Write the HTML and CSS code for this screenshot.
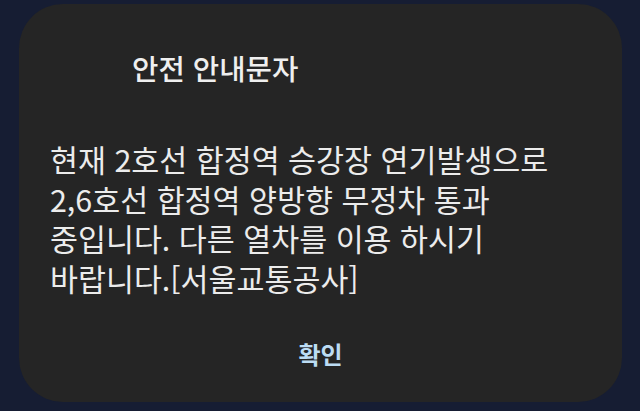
FILE: index.html
```html
<!DOCTYPE html>
<html lang="ko">
<head>
<meta charset="utf-8">
<link rel="stylesheet" href="styles.css">
</head>
<body>
<div class="dialog">
  <h1 class="title">안전 안내문자</h1>
  <p class="message">현재 2호선 합정역 승강장 연기발생으로<br>2,6호선 합정역 양방향 무정차 통과<br>중입니다. 다른 열차를 이용 하시기<br>바랍니다.[서울교통공사]</p>
  <div class="actions"><span class="ok">확인</span></div>
</div>
</body>
</html>
```
FILE: styles.css
```css
html, body {
  margin: 0;
  padding: 0;
}
body {
  width: 640px;
  height: 411px;
  background: #161d33;
  overflow: hidden;
  font-family: "Noto Sans CJK KR", "Noto Sans", sans-serif;
}
.dialog {
  box-sizing: border-box;
  margin: 4px 18px 0 19px;
  height: 398px;
  background: #252525;
  border-radius: 44px;
  padding: 44px 20px 0 31px;
  display: flex;
  flex-direction: column;
}
.title {
  margin: 0 0 0 82px;
  font-size: 28.7px;
  font-weight: 500;
  line-height: 40px;
  color: #efefef;
}
.message {
  margin: 52px 0 0 0;
  font-size: 30.4px;
  font-weight: 400;
  line-height: 39.5px;
  color: #ececec;
}
.actions {
  margin-top: 41px;
  display: flex;
  justify-content: center;
  padding-right: 11px;
}
.ok {
  font-size: 24px;
  font-weight: 700;
  line-height: 30px;
  color: #bcdcf4;
}
```
